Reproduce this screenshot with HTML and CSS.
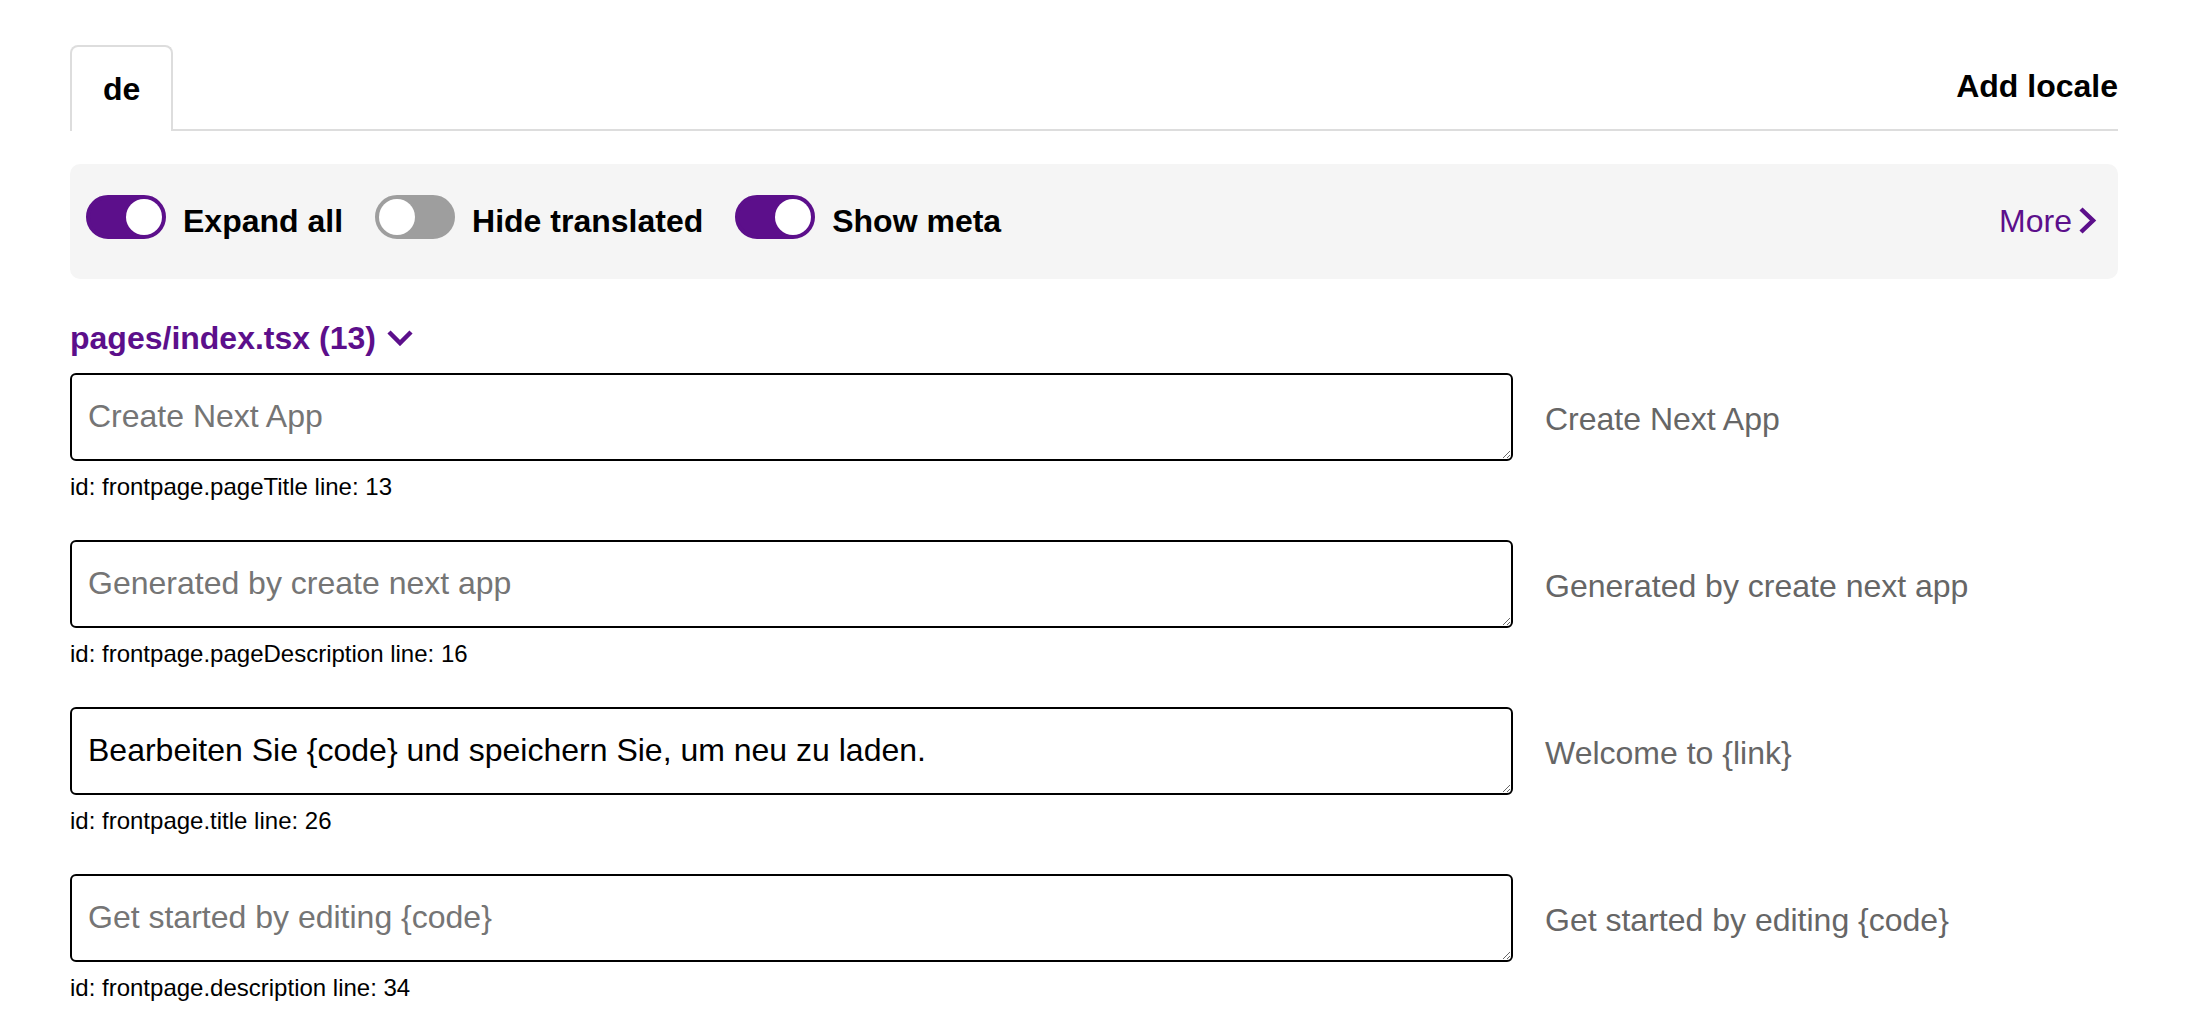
FILE: index.html
```html
<!DOCTYPE html>
<html lang="en">
<head>
<meta charset="utf-8">
<title>Translations</title>
<link rel="stylesheet" href="styles.css">
</head>
<body>
<main class="page">
  <div class="tabbar">
    <div class="tab tab-active">de</div>
    <button class="add-locale">Add locale</button>
  </div>

  <div class="toolbar">
    <div class="toggles">
      <label class="switch-item">
        <span class="switch on"><span class="knob"></span></span>
        <span class="switch-label">Expand all</span>
      </label>
      <label class="switch-item">
        <span class="switch off"><span class="knob"></span></span>
        <span class="switch-label">Hide translated</span>
      </label>
      <label class="switch-item">
        <span class="switch on"><span class="knob"></span></span>
        <span class="switch-label">Show meta</span>
      </label>
    </div>
    <a class="more" href="#">More<svg class="more-icon" width="19" height="27" viewBox="0 0 19 27"><polyline points="3,2 15,13.5 3,25" fill="none" stroke="#5c0f8b" stroke-width="4.5"/></svg></a>
  </div>

  <h2 class="file-heading">pages/index.tsx (13)<svg class="chev-down" width="26" height="16" viewBox="0 0 26 16"><polyline points="2,2 13,13 24,2" fill="none" stroke="#5c0f8b" stroke-width="4.5"/></svg></h2>

  <div class="entries">
    <div class="entry">
      <div class="entry-row">
        <textarea class="entry-input" rows="1" placeholder="Create Next App"></textarea>
        <div class="entry-source">Create Next App</div>
      </div>
      <div class="entry-meta">id: frontpage.pageTitle line: 13</div>
    </div>
    <div class="entry">
      <div class="entry-row">
        <textarea class="entry-input" rows="1" placeholder="Generated by create next app"></textarea>
        <div class="entry-source">Generated by create next app</div>
      </div>
      <div class="entry-meta">id: frontpage.pageDescription line: 16</div>
    </div>
    <div class="entry">
      <div class="entry-row">
        <textarea class="entry-input" rows="1" placeholder="Welcome to {link}">Bearbeiten Sie {code} und speichern Sie, um neu zu laden.</textarea>
        <div class="entry-source">Welcome to {link}</div>
      </div>
      <div class="entry-meta">id: frontpage.title line: 26</div>
    </div>
    <div class="entry">
      <div class="entry-row">
        <textarea class="entry-input" rows="1" placeholder="Get started by editing {code}"></textarea>
        <div class="entry-source">Get started by editing {code}</div>
      </div>
      <div class="entry-meta">id: frontpage.description line: 34</div>
    </div>
  </div>
</main>
</body>
</html>
```
FILE: styles.css
```css
html {
  overflow: hidden;
}
body {
  margin: 0;
  background: #ffffff;
  font-family: "Liberation Sans", Arial, Helvetica, sans-serif;
  color: #000;
}
.page {
  width: 2048px;
  margin-left: 70px;
  padding-top: 45px;
}

/* Tabs */
.tabbar {
  display: flex;
  justify-content: space-between;
  align-items: flex-start;
  border-bottom: 2px solid #dddddd;
}
.tab {
  font-size: 32px;
  line-height: 37px;
  font-weight: bold;
  padding: 24px 31px 23px;
  border: 2px solid #dddddd;
  border-bottom: none;
  border-radius: 8px 8px 0 0;
  background: #fff;
  margin-bottom: -2px;
}
.add-locale {
  font-family: inherit;
  font-size: 32px;
  line-height: 37px;
  font-weight: bold;
  color: #000;
  background: none;
  border: none;
  padding: 0;
  margin-top: 23px;
  cursor: pointer;
}

/* Toolbar */
.toolbar {
  margin-top: 33px;
  background: #f5f5f5;
  border-radius: 10px;
  padding: 39px 21px 39px 16px;
  display: flex;
  justify-content: space-between;
  align-items: center;
}
.toggles {
  display: flex;
  align-items: center;
  gap: 32px;
  height: 37px;
}
.switch-item {
  display: flex;
  align-items: center;
  gap: 17px;
  height: 37px;
}
.switch {
  box-sizing: border-box;
  width: 80px;
  height: 44px;
  border-radius: 22px;
  border: 4px solid;
  display: flex;
  margin-top: -10px;
}
.switch.on {
  background: #5c0f8b;
  border-color: #5c0f8b;
  justify-content: flex-end;
}
.switch.off {
  background: #9e9e9e;
  border-color: #9e9e9e;
  justify-content: flex-start;
}
.knob {
  width: 36px;
  height: 36px;
  border-radius: 50%;
  background: #fff;
}
.switch-label {
  font-size: 32px;
  line-height: 37px;
  font-weight: bold;
}
.more {
  display: flex;
  align-items: center;
  gap: 6px;
  font-size: 32px;
  line-height: 37px;
  color: #5c0f8b;
  text-decoration: none;
}
.more-icon {
  margin-top: -2px;
}

/* File heading */
.file-heading {
  margin: 41px 0 16px;
  font-size: 32px;
  line-height: 37px;
  font-weight: bold;
  color: #5c0f8b;
  display: flex;
  align-items: center;
  gap: 11px;
}
.chev-down {
  margin-top: -2px;
}

/* Entries */
.entry {
  margin-bottom: 39px;
}
.entry-row {
  display: grid;
  grid-template-columns: 1443px 1fr;
  column-gap: 32px;
  align-items: center;
}
.entry-input {
  box-sizing: border-box;
  height: 88px;
  width: 100%;
  border: 2px solid #000;
  border-radius: 6px;
  padding: 22px 16px;
  font-family: inherit;
  font-size: 32px;
  line-height: 38px;
  color: #000;
  background: #fff;
  resize: vertical;
  margin: 0;
  display: block;
}
.entry-input::placeholder {
  color: #757575;
}
.entry-source {
  font-size: 32px;
  line-height: 37px;
  color: #666666;
  padding-top: 5px;
}
.entry-meta {
  margin-top: 12px;
  font-size: 24px;
  line-height: 28px;
}
```
